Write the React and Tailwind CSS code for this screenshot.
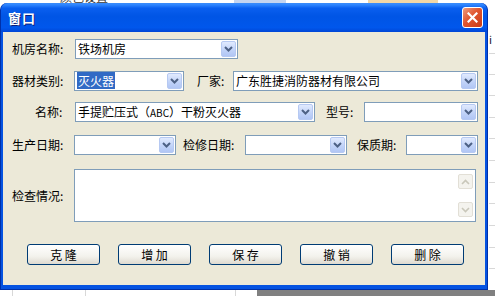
import React from "react";

const Arrow = () => (
  <div className="w-[15px] h-[16px] rounded-[2px] border border-[#B6C9F2] bg-[linear-gradient(to_bottom,#E1EAFE,#C0D2F8_60%,#B1C6F5)] flex items-center justify-center shrink-0">
    <svg width="9" height="6" viewBox="0 0 9 6">
      <path d="M1 1l3.5 3.5L8 1" stroke="#4D6185" strokeWidth="2" fill="none" />
    </svg>
  </div>
);

const Combo = ({ className, children }) => (
  <div
    className={`${className} h-[20px] border border-[#7F9DB9] bg-white flex items-center justify-between pl-[2px] pr-[1px] shrink-0`}
  >
    <div className="text-[12px] leading-[14px] text-black whitespace-nowrap">{children}</div>
    <Arrow />
  </div>
);

const ScrollBtn = ({ up }) => (
  <div className="w-[15px] h-[15px] rounded-[2px] border border-[#E2DFD6] bg-[#F4F3EE] flex items-center justify-center">
    <svg width="9" height="6" viewBox="0 0 9 6">
      <path
        d={up ? "M1 5l3.5-3.5L8 5" : "M1 1l3.5 3.5L8 1"}
        stroke="#C9C7BA"
        strokeWidth="1.6"
        fill="none"
      />
    </svg>
  </div>
);

const Label = ({ className, children }) => (
  <div className={`${className} text-[12px] leading-[14px] text-black whitespace-nowrap shrink-0`}>
    {children}
  </div>
);

const XpButton = ({ children }) => (
  <button className="w-[73px] h-[21px] rounded-[3px] border border-[#003C74] bg-[linear-gradient(to_bottom,#FFFFFF,#F3F2EC_60%,#DEDAD0)] text-[12px] leading-[14px] text-black whitespace-pre">
    {children}
  </button>
);

export default function App() {
  const gridRows = [53, 74, 95, 117, 138, 160, 182, 203, 225, 247, 268];

  return (
    <div className="relative w-[495px] h-[296px] overflow-hidden bg-white font-['Noto_Sans_CJK_SC','Noto_Sans',sans-serif]">
      {/* things behind the dialog */}
      <div className="absolute left-[60px] top-[-9px] text-[12px] text-[#333] leading-[12px]">颜色设置</div>
      <div className="absolute left-[234px] top-0 w-[52px] h-[3px] bg-[#C5D5F0]" />
      <div className="absolute left-[368px] top-0 w-[70px] h-[3px] bg-[#F2D7A6]" />
      <div className="absolute left-[489px] top-[33px] text-[11px] text-[#222] leading-[12px]">i</div>
      {gridRows.map((y) => (
        <div key={y} className="absolute left-[489px] w-[6px] h-px bg-[#D8D8D8]" style={{ top: y }} />
      ))}
      <div className="absolute left-[12px] top-[290px] w-px h-[6px] bg-[#D8D8D8]" />
      <div className="absolute left-[85px] top-[290px] w-px h-[6px] bg-[#D8D8D8]" />
      <div className="absolute left-[235px] top-[290px] w-px h-[6px] bg-[#D8D8D8]" />
      <div className="absolute left-[257px] top-[290px] w-[238px] h-[6px] bg-[#808080]" />

      {/* dialog window */}
      <div className="absolute left-0 top-[3px] w-[488px] h-[287px] flex flex-col rounded-t-[7px] bg-[#0553E1] border border-[#0030A8] border-t-0">
        <div className="h-[29px] rounded-t-[7px] bg-[linear-gradient(to_bottom,#3C8CF8_0%,#2F86FF_6%,#0A5FEF_18%,#0055E5_45%,#0057EC_85%,#0046D6_100%)] flex items-center justify-between pl-[7px] pr-[4px]">
          <span className="text-white font-bold text-[13px] leading-[14px] tracking-[1px] [text-shadow:1px_1px_0_#0A1E7A]">
            窗口
          </span>
          <div className="w-[21px] h-[21px] rounded-[3px] border border-white bg-[linear-gradient(135deg,#F09C7E,#E0552F_45%,#C93B17)] flex items-center justify-center">
            <svg width="11" height="11" viewBox="0 0 11 11">
              <path d="M1.5 1.5l8 8M9.5 1.5l-8 8" stroke="white" strokeWidth="2.2" strokeLinecap="square" />
            </svg>
          </div>
        </div>

        <div className="flex-1 mx-[2px] mb-[4px] bg-[#ECE9D8] flex flex-col pl-[9px]">
          {/* row 1 */}
          <div className="mt-[7px] flex items-center">
            <Label className="w-[63px]">机房名称:</Label>
            <Combo className="w-[163px]">铁场机房</Combo>
          </div>

          {/* row 2 */}
          <div className="mt-[12px] flex items-center">
            <Label className="w-[62px]">器材类别:</Label>
            <Combo className="w-[110px]">
              <span className="bg-[#316AC5] text-white px-[1px]">灭火器</span>
            </Combo>
            <Label className="ml-[13px] w-[36px]">厂家:</Label>
            <Combo className="w-[245px]">广东胜捷消防器材有限公司</Combo>
          </div>

          {/* row 3 */}
          <div className="mt-[11px] flex items-center">
            <Label className="ml-[23px] w-[40px]">名称:</Label>
            <Combo className="w-[240px]">
              手提贮压式（<span className="text-[10px]">ABC</span>）干粉灭火器
            </Combo>
            <Label className="ml-[11px] w-[38px]">型号:</Label>
            <Combo className="w-[114px]" />
          </div>

          {/* row 4 */}
          <div className="mt-[13px] flex items-center">
            <Label className="w-[62px]">生产日期:</Label>
            <Combo className="w-[102px]" />
            <Label className="ml-[7px] w-[62px]">检修日期:</Label>
            <Combo className="w-[102px]" />
            <Label className="ml-[10px] w-[49px]">保质期:</Label>
            <Combo className="w-[72px]" />
          </div>

          {/* row 5 */}
          <div className="mt-[14px] flex items-center">
            <Label className="w-[62px]">检查情况:</Label>
            <div className="w-[402px] h-[53px] border border-[#7F9DB9] bg-white flex justify-end pr-[2px] py-[4px]">
              <div className="flex flex-col justify-between">
                <ScrollBtn up />
                <ScrollBtn />
              </div>
            </div>
          </div>

          {/* buttons */}
          <div className="mt-[22px] ml-[15px] flex gap-[18px]">
            <XpButton>克 隆</XpButton>
            <XpButton>增 加</XpButton>
            <XpButton>保 存</XpButton>
            <XpButton>撤 销</XpButton>
            <XpButton>删 除</XpButton>
          </div>
        </div>
      </div>
    </div>
  );
}
